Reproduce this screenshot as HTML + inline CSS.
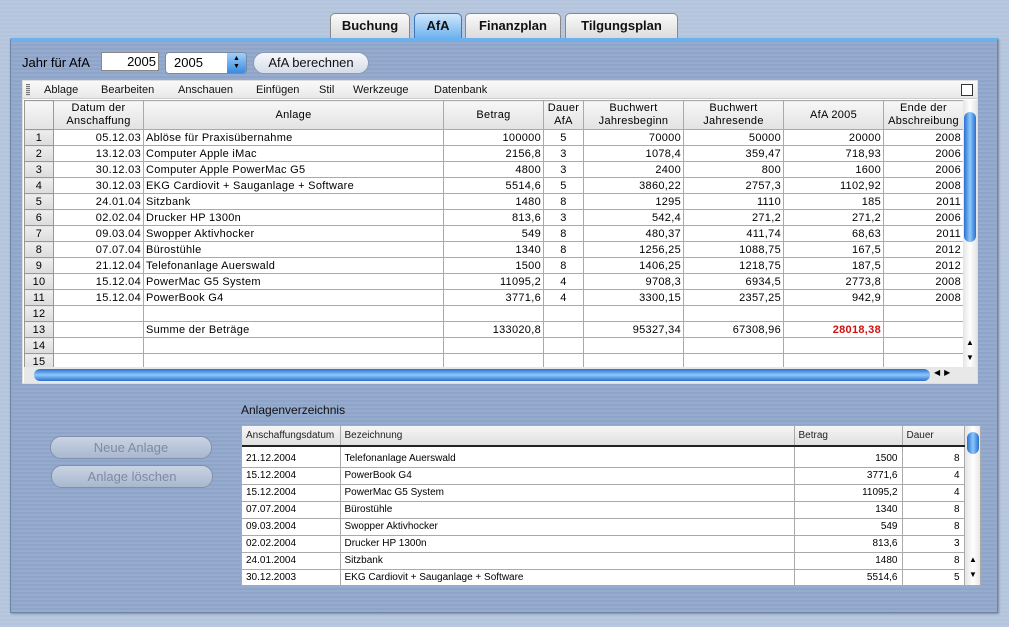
<!DOCTYPE html>
<html><head><meta charset="utf-8"><style>
*{margin:0;padding:0;box-sizing:border-box}
body{width:1009px;height:627px;overflow:hidden;background:#b3c4dc;font-family:"Liberation Sans","DejaVu Sans",sans-serif;position:relative;
background-image:repeating-linear-gradient(0deg,rgba(255,255,255,.08) 0 2px,transparent 2px 4px)}
.abs{position:absolute}
.panel{left:10px;top:38px;width:988px;height:575px;background:#8ea5c9;border:1px solid #6e82a4;border-top:3px solid #6cb0ee;
background-image:repeating-linear-gradient(0deg,rgba(255,255,255,.07) 0 2px,transparent 2px 4px);box-shadow:1px 1px 2px rgba(0,0,0,.3)}
.tab{top:13px;height:25px;border:1px solid #888;border-bottom:none;border-radius:5px 5px 0 0;background:linear-gradient(#fafafa,#dcdcdc);font-weight:bold;font-size:13px;text-align:center;line-height:24px;color:#111}
.tab.on{background:linear-gradient(#cfe6fb,#6eb2ee);border-color:#3a78c0}
.btn{border:1px solid #8a9ab4;border-radius:11px;background:linear-gradient(#f6f8fb,#d6dde8);text-align:center;font-size:13px;color:#111}
.btn.dis{background:linear-gradient(#c9d3e3,#a9b8cf);color:#7d8aa0;border-color:#8190aa}
table{border-collapse:collapse;table-layout:fixed}
.ss td{border:1px solid #aaa;height:16px;font-size:11px;padding:0 2px;white-space:nowrap;overflow:hidden;background:#fff;letter-spacing:.3px}
.ss td.n{background:linear-gradient(#eee,#dcdcdc);text-align:center;border-color:#999}
.ss tr.h td{height:29px;background:linear-gradient(#f7f7f7,#e2e2e2);text-align:center;line-height:13px;font-size:11px}
.r{text-align:right}
.lt td{border-right:1px solid #aaa;border-bottom:1px solid #aaa;height:17px;font-size:10px;padding:0 4px;white-space:nowrap;overflow:hidden;background:#fff}
.lt tr.h td{height:20px;background:linear-gradient(#f6f6f6,#e0e0e0);border-bottom:2px solid #222;font-size:10px;color:#222}
.lt tr.g td{height:4px;border-bottom:none}
</style></head><body>
<div class="abs panel"></div>
<div class="abs tab" style="left:330px;width:80px">Buchung</div>
<div class="abs tab on" style="left:414px;width:48px">AfA</div>
<div class="abs tab" style="left:465px;width:96px">Finanzplan</div>
<div class="abs tab" style="left:565px;width:113px">Tilgungsplan</div>

<div class="abs" style="left:22px;top:55px;font-size:13px">Jahr für AfA</div>
<div class="abs" style="left:101px;top:52px;width:58px;height:19px;background:#fff;border:1px solid #888;font-size:13px;text-align:right;padding-right:2px;line-height:18px">2005</div>
<div class="abs" style="left:165px;top:52px;width:82px;height:22px;background:#fff;border:1px solid #7a8aa4;border-radius:4px;font-size:13px;line-height:20px;padding-left:8px;overflow:hidden">2005<div class="abs" style="right:0;top:0;width:19px;height:20px;background:linear-gradient(#9fd0fb,#3c8be0);font-size:7px;line-height:8px;text-align:center;padding-top:2px">▲<br>▼</div></div>
<div class="abs btn" style="left:253px;top:52px;width:116px;height:22px;line-height:20px">AfA berechnen</div>

<div class="abs" style="left:22px;top:80px;width:956px;height:304px;background:#fff;border:1px solid #ddd">
 <div class="abs" style="left:0;top:0;width:954px;height:18px;background:linear-gradient(#fafafa,#e8e8e8);font-size:11px;line-height:18px;color:#111;border-bottom:1px solid #ccc">
  <span class="abs" style="left:3px;top:3px;width:4px;height:12px;background:repeating-linear-gradient(#777 0 1px,#ddd 1px 2px)"></span>
  <span class="abs" style="left:21px">Ablage</span><span class="abs" style="left:78px">Bearbeiten</span><span class="abs" style="left:155px">Anschauen</span><span class="abs" style="left:233px">Einfügen</span><span class="abs" style="left:296px">Stil</span><span class="abs" style="left:330px">Werkzeuge</span><span class="abs" style="left:411px">Datenbank</span>
  <span class="abs" style="left:938px;top:3px;width:12px;height:12px;border:1px solid #333;background:#fff"></span>
 </div>
 <table class="ss abs" style="left:1px;top:19px;width:939px">
 <colgroup><col style="width:29px"><col style="width:90px"><col style="width:300px"><col style="width:100px"><col style="width:40px"><col style="width:100px"><col style="width:100px"><col style="width:100px"><col style="width:80px"></colgroup>
 <tr class="h"><td class="n"></td><td>Datum der<br>Anschaffung</td><td>Anlage</td><td>Betrag</td><td>Dauer<br>AfA</td><td>Buchwert<br>Jahresbeginn</td><td>Buchwert<br>Jahresende</td><td>AfA 2005</td><td>Ende der<br>Abschreibung</td></tr>
 <tr><td class="n">1</td><td class="r">05.12.03</td><td>Ablöse für Praxisübernahme</td><td class="r">100000</td><td style="text-align:center">5</td><td class="r">70000</td><td class="r">50000</td><td class="r">20000</td><td class="r">2008</td></tr>
 <tr><td class="n">2</td><td class="r">13.12.03</td><td>Computer Apple iMac</td><td class="r">2156,8</td><td style="text-align:center">3</td><td class="r">1078,4</td><td class="r">359,47</td><td class="r">718,93</td><td class="r">2006</td></tr>
 <tr><td class="n">3</td><td class="r">30.12.03</td><td>Computer Apple PowerMac G5</td><td class="r">4800</td><td style="text-align:center">3</td><td class="r">2400</td><td class="r">800</td><td class="r">1600</td><td class="r">2006</td></tr>
 <tr><td class="n">4</td><td class="r">30.12.03</td><td>EKG Cardiovit + Sauganlage + Software</td><td class="r">5514,6</td><td style="text-align:center">5</td><td class="r">3860,22</td><td class="r">2757,3</td><td class="r">1102,92</td><td class="r">2008</td></tr>
 <tr><td class="n">5</td><td class="r">24.01.04</td><td>Sitzbank</td><td class="r">1480</td><td style="text-align:center">8</td><td class="r">1295</td><td class="r">1110</td><td class="r">185</td><td class="r">2011</td></tr>
 <tr><td class="n">6</td><td class="r">02.02.04</td><td>Drucker HP 1300n</td><td class="r">813,6</td><td style="text-align:center">3</td><td class="r">542,4</td><td class="r">271,2</td><td class="r">271,2</td><td class="r">2006</td></tr>
 <tr><td class="n">7</td><td class="r">09.03.04</td><td>Swopper Aktivhocker</td><td class="r">549</td><td style="text-align:center">8</td><td class="r">480,37</td><td class="r">411,74</td><td class="r">68,63</td><td class="r">2011</td></tr>
 <tr><td class="n">8</td><td class="r">07.07.04</td><td>Bürostühle</td><td class="r">1340</td><td style="text-align:center">8</td><td class="r">1256,25</td><td class="r">1088,75</td><td class="r">167,5</td><td class="r">2012</td></tr>
 <tr><td class="n">9</td><td class="r">21.12.04</td><td>Telefonanlage Auerswald</td><td class="r">1500</td><td style="text-align:center">8</td><td class="r">1406,25</td><td class="r">1218,75</td><td class="r">187,5</td><td class="r">2012</td></tr>
 <tr><td class="n">10</td><td class="r">15.12.04</td><td>PowerMac G5 System</td><td class="r">11095,2</td><td style="text-align:center">4</td><td class="r">9708,3</td><td class="r">6934,5</td><td class="r">2773,8</td><td class="r">2008</td></tr>
 <tr><td class="n">11</td><td class="r">15.12.04</td><td>PowerBook G4</td><td class="r">3771,6</td><td style="text-align:center">4</td><td class="r">3300,15</td><td class="r">2357,25</td><td class="r">942,9</td><td class="r">2008</td></tr>
 <tr><td class="n">12</td><td></td><td></td><td></td><td></td><td></td><td></td><td></td><td></td></tr>
 <tr><td class="n">13</td><td></td><td>Summe der Beträge</td><td class="r">133020,8</td><td></td><td class="r">95327,34</td><td class="r">67308,96</td><td class="r" style="color:#d01010;font-weight:bold">28018,38</td><td></td></tr>
 <tr><td class="n">14</td><td></td><td></td><td></td><td></td><td></td><td></td><td></td><td></td></tr>
 <tr><td class="n">15</td><td></td><td></td><td></td><td></td><td></td><td></td><td></td><td></td></tr>
 </table>
 <div class="abs" style="left:940px;top:19px;width:14px;height:268px;background:linear-gradient(90deg,#e4e4e4,#fff,#e4e4e4)">
  <div class="abs" style="left:1px;top:12px;width:12px;height:130px;border-radius:6px;background:linear-gradient(90deg,#2a6fcf,#8cc8fb,#2a6fcf)"></div>
  <div class="abs" style="left:0;top:235px;width:14px;font-size:8px;text-align:center;line-height:15px">▲<br>▼</div>
 </div>
 <div class="abs" style="left:1px;top:286px;width:953px;height:16px;background:#e8e8e8">
  <div class="abs" style="left:10px;top:2px;width:896px;height:12px;border-radius:6px;background:linear-gradient(#2a6fcf,#8cc8fb,#2a6fcf)"></div>
  <div class="abs" style="left:910px;top:1px;font-size:8px;letter-spacing:4px">◀▶</div>
 </div>
</div>

<div class="abs" style="left:241px;top:403px;font-size:12px;color:#111">Anlagenverzeichnis</div>
<div class="abs btn dis" style="left:50px;top:436px;width:162px;height:23px;line-height:21px">Neue Anlage</div>
<div class="abs btn dis" style="left:51px;top:465px;width:162px;height:23px;line-height:21px">Anlage löschen</div>

<div class="abs" style="left:241px;top:425px;width:740px;height:161px;background:#fff;border:1px solid #aaa;overflow:hidden">
 <table class="lt abs" style="left:0;top:0;width:722px">
 <colgroup><col style="width:98px"><col style="width:454px"><col style="width:108px"><col style="width:62px"></colgroup>
 <tr class="h"><td>Anschaffungsdatum</td><td>Bezeichnung</td><td>Betrag</td><td>Dauer</td></tr>
 <tr class="g"><td></td><td></td><td></td><td></td></tr>
 <tr><td>21.12.2004</td><td>Telefonanlage Auerswald</td><td class="r">1500</td><td class="r">8</td></tr>
 <tr><td>15.12.2004</td><td>PowerBook G4</td><td class="r">3771,6</td><td class="r">4</td></tr>
 <tr><td>15.12.2004</td><td>PowerMac G5 System</td><td class="r">11095,2</td><td class="r">4</td></tr>
 <tr><td>07.07.2004</td><td>Bürostühle</td><td class="r">1340</td><td class="r">8</td></tr>
 <tr><td>09.03.2004</td><td>Swopper Aktivhocker</td><td class="r">549</td><td class="r">8</td></tr>
 <tr><td>02.02.2004</td><td>Drucker HP 1300n</td><td class="r">813,6</td><td class="r">3</td></tr>
 <tr><td>24.01.2004</td><td>Sitzbank</td><td class="r">1480</td><td class="r">8</td></tr>
 <tr><td>30.12.2003</td><td>EKG Cardiovit + Sauganlage + Software</td><td class="r">5514,6</td><td class="r">5</td></tr>
 </table>
 <div class="abs" style="left:723px;top:0;width:16px;height:160px;background:linear-gradient(90deg,#e4e4e4,#fff,#e4e4e4)">
  <div class="abs" style="left:2px;top:6px;width:12px;height:22px;border-radius:6px;background:linear-gradient(90deg,#2a6fcf,#8cc8fb,#2a6fcf)"></div>
  <div class="abs" style="left:0;top:126px;width:16px;font-size:8px;text-align:center;line-height:15px">▲<br>▼</div>
 </div>
</div>
</body></html>
